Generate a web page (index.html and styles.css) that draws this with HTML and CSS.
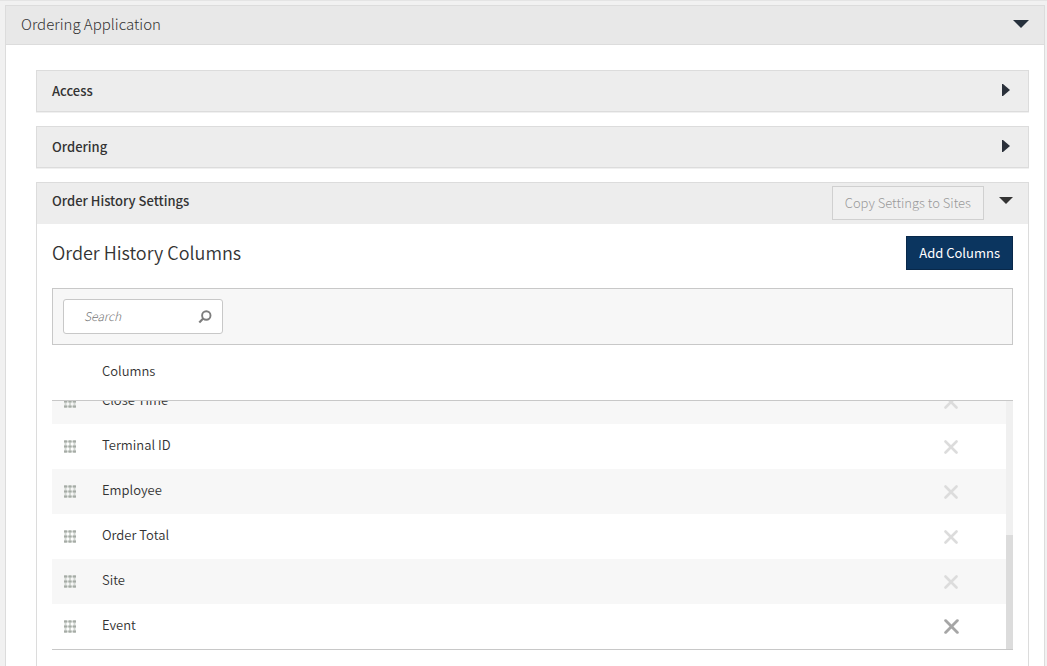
FILE: index.html
```html
<!DOCTYPE html>
<html lang="en">
<head>
<meta charset="utf-8">
<title>Ordering Application</title>
<link rel="stylesheet" href="styles.css">
</head>
<body>
<svg class="defs" aria-hidden="true">
  <symbol id="down" viewBox="0 0 16 8"><path d="M0 0h16L8 8z"/></symbol>
  <symbol id="right" viewBox="0 0 8 12"><path d="M0 0h1l7 6-7 6H0z"/></symbol>
  <symbol id="grip" viewBox="0 0 12 13">
    <path d="M0 1.500h12M0 6.500h12M0 11.500h12M1.500 0v13M6 0v13M10.500 0v13" stroke="#d3d8d3" stroke-width="2"/>
    <path d="M0 .5h3v2H0zM4.500 .5h3v2h-3zM9 .5h3v2H9zM0 5.500h3v2H0zM4.500 5.500h3v2h-3zM9 5.500h3v2H9zM0 10.500h3v2H0zM4.500 10.500h3v2h-3zM9 10.500h3v2H9z" fill="#a6aba6"/>
  </symbol>
  <symbol id="cross" viewBox="0 0 14 14"><path d="M1.500 1.500l11 11M12.500 1.500l-11 11" fill="none" stroke="currentColor" stroke-width="2.600" stroke-linecap="round"/></symbol>
</svg>
<main class="panel">
  <button class="panel-header" type="button" aria-expanded="true">
    <span>Ordering Application</span>
    <svg class="arrow-down"><use href="#down"/></svg>
  </button>
  <div class="panel-body">
    <button class="section-bar" type="button" aria-expanded="false">
      <span class="bar-label">Access</span>
      <svg class="arrow-right"><use href="#right"/></svg>
    </button>
    <button class="section-bar" type="button" aria-expanded="false">
      <span class="bar-label">Ordering</span>
      <svg class="arrow-right"><use href="#right"/></svg>
    </button>
    <section class="section">
      <header class="section-header">
        <h2 class="section-title">Order History Settings</h2>
        <button class="button button-disabled" type="button" disabled>Copy Settings to Sites</button>
        <button class="toggle" type="button" aria-label="Collapse section"><svg class="arrow-small"><use href="#down"/></svg></button>
      </header>
      <div class="section-body">
        <div class="title-row">
          <h3 class="title">Order History Columns</h3>
          <button class="button button-primary" type="button">Add Columns</button>
        </div>
        <div class="toolbar">
          <label class="search">
            <input class="search-input" type="text" placeholder="Search" aria-label="Search">
            <svg class="search-icon" viewBox="0 0 14 14"><circle cx="8.300" cy="5.500" r="4.200" fill="none" stroke="#7d7d7d" stroke-width="1.900"/><path d="M5.200 8.500L1.300 12.500" stroke="#7d7d7d" stroke-width="2.200"/></svg>
          </label>
        </div>
        <div class="list-head">Columns</div>
        <div class="list">
          <ul class="rows">
            <li class="row row-alt"><svg class="grip"><use href="#grip"/></svg><span class="name">Close Time</span><button class="remove" type="button" aria-label="Remove Close Time" disabled><svg class="cross"><use href="#cross"/></svg></button></li>
            <li class="row"><svg class="grip"><use href="#grip"/></svg><span class="name">Terminal ID</span><button class="remove" type="button" aria-label="Remove Terminal ID" disabled><svg class="cross"><use href="#cross"/></svg></button></li>
            <li class="row row-alt"><svg class="grip"><use href="#grip"/></svg><span class="name">Employee</span><button class="remove" type="button" aria-label="Remove Employee" disabled><svg class="cross"><use href="#cross"/></svg></button></li>
            <li class="row"><svg class="grip"><use href="#grip"/></svg><span class="name">Order Total</span><button class="remove" type="button" aria-label="Remove Order Total" disabled><svg class="cross"><use href="#cross"/></svg></button></li>
            <li class="row row-alt"><svg class="grip"><use href="#grip"/></svg><span class="name">Site</span><button class="remove" type="button" aria-label="Remove Site" disabled><svg class="cross"><use href="#cross"/></svg></button></li>
            <li class="row"><svg class="grip"><use href="#grip"/></svg><span class="name">Event</span><button class="remove remove-active" type="button" aria-label="Remove Event"><svg class="cross"><use href="#cross"/></svg></button></li>
          </ul>
          <div class="track"><div class="thumb"></div></div>
        </div>
      </div>
    </section>
  </div>
</main>
</body>
</html>
```
FILE: styles.css
```css
* { box-sizing: border-box; }
body {
  display: flex;
  min-height: 100vh;
  margin: 0;
  padding: 4px 2px 0 5px;
  border-top: 1px solid #e4e4e4;
  background: #f1f1f1;
  color: #333;
  font: 350 13px/20px "Noto Sans CJK SC", "Noto Sans", sans-serif;
}
button { font: inherit; color: inherit; border-radius: 0; }
h2, h3, ul { margin: 0; padding: 0; }
svg { flex: none; display: block; }
.defs { position: absolute; width: 0; height: 0; }
.panel {
  display: flex;
  flex-direction: column;
  flex: 1;
  border: 1px solid #dcdcdc;
  border-bottom: 0;
  background: #fff;
}
.panel-header {
  display: flex;
  align-items: center;
  justify-content: space-between;
  height: 39px;
  padding: 0 15px 2px;
  border: 0;
  border-bottom: 1px solid #dcdcdc;
  background: #e8e8e8;
  font-size: 15px;
  font-weight: 300;
}
.arrow-down { width: 16px; height: 8px; fill: #26303c; }
.arrow-right { width: 8px; height: 12px; fill: #2a303a; }
.arrow-small { width: 14px; height: 7px; fill: #333; }
.panel-body {
  display: flex;
  flex-direction: column;
  flex: 1;
  gap: 14px;
  padding: 25px 15px 0 30px;
}
.section-bar {
  display: flex;
  align-items: center;
  justify-content: space-between;
  height: 42px;
  padding: 0 18px 2px 15px;
  border: 1px solid #dcdcdc;
  background: #ededed;
  box-shadow: 0 1px 0 #f0f0f0;
  font-weight: 500;
}
.bar-label { padding-top: 2px; }
.section {
  flex: 1;
  border: 1px solid #dcdcdc;
  border-bottom: 0;
}
.section-header {
  display: flex;
  align-items: center;
  height: 41px;
  padding: 0 15px 1px;
  background: #ededed;
}
.section-title {
  flex: 1;
  padding-bottom: 4px;
  font-size: 13px;
  font-weight: 500;
}
.button {
  height: 34px;
  padding: 0 12px;
  border: 1px solid;
}
.button-disabled { border-color: #d0d0d0; background: #f0f0f0; color: #999; font-weight: 300; }
.button-primary { border-color: #08284a; background: #0b355f; color: #fff; font-weight: 400; }
.toggle { margin-left: 15px; padding: 0 0 6px; border: 0; background: none; }
.section-body { padding: 12px 15px; }
.title-row { display: flex; align-items: center; justify-content: space-between; }
.title { padding-bottom: 2px; font-size: 18px; font-weight: 350; line-height: 26px; }
.toolbar {
  margin-top: 18px;
  padding: 10px;
  border: 1px solid #c8c8c8;
  background: #f7f7f7;
}
.search {
  display: flex;
  align-items: center;
  width: 160px;
  height: 35px;
  padding: 0 10px 0 20px;
  border: 1px solid #c8c8c8;
  border-radius: 3px;
  background: #fff;
}
.search-input {
  flex: 1;
  min-width: 0;
  padding: 0 0 2px;
  border: 0;
  outline: 0;
  background: none;
  font: italic 300 12px/20px "Noto Sans CJK SC", "Noto Sans", sans-serif;
}
.search-input::placeholder { color: #777; opacity: 1; }
.search-icon { width: 14px; height: 14px; }
.list-head { height: 56px; padding: 16px 50px; border-bottom: 1px solid #c8c8c8; }
.list { display: flex; height: 249px; border-bottom: 1px solid #c8c8c8; }
.rows {
  display: flex;
  flex: 1;
  flex-direction: column;
  justify-content: flex-end;
  overflow: hidden;
  list-style: none;
}
.row {
  display: flex;
  flex: none;
  align-items: center;
  height: 45px;
  padding: 0 48px 0 12px;
}
.row-alt { background: #f7f7f7; }
.grip { width: 12px; height: 13px; }
.name { flex: 1; padding: 0 26px 4px; }
.remove {
  display: flex;
  justify-content: center;
  width: 14px;
  padding: 0;
  border: 0;
  background: none;
  color: #dcdcdc;
}
.cross { width: 14px; height: 14px; }
.remove-active { color: #a6a6a6; }
.remove-active .cross { width: 15px; height: 15px; }
.track { display: flex; align-items: flex-end; width: 7px; background: #f0f0f0; }
.thumb { width: 7px; height: 46%; background: #dcdcdc; }
```
